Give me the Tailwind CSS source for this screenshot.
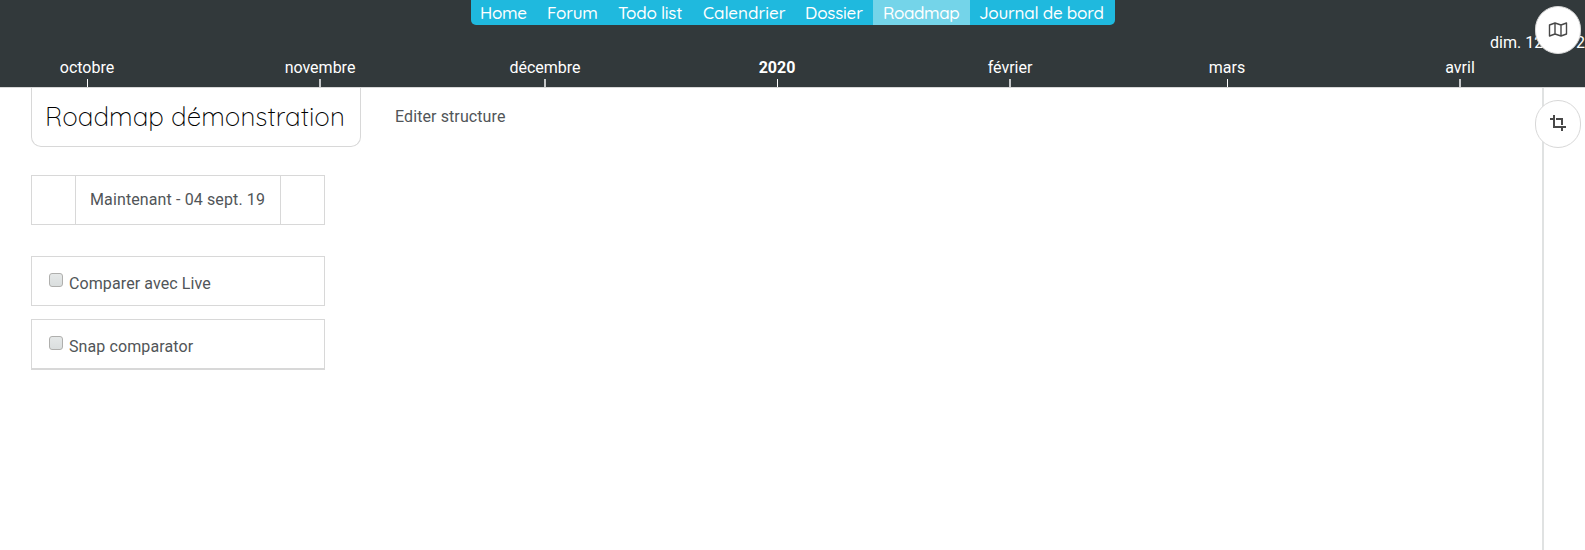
<!DOCTYPE html>
<html lang="fr">
<head>
<meta charset="utf-8">
<title>Roadmap démonstration</title>
<script src="https://cdn.jsdelivr.net/npm/@tailwindcss/browser@4"></script>
</head>
<body class="relative h-[550px] w-[1585px] overflow-hidden bg-white font-['Roboto',sans-serif] text-[16px] text-[#515558]">
<header class="relative flex h-[88px] flex-col border-b border-[#d8d8d8] bg-[#32393b] text-white">
  <nav class="ml-[471px] flex h-[25px] w-[644px] overflow-hidden rounded-b-[5px] bg-[#1fb9de] font-['Quicksand','Lato',sans-serif] text-[17px] leading-[26px] font-medium whitespace-nowrap">
    <a class="w-[66px] pl-[9px] tracking-[-0.3px]">Home</a>
    <a class="w-[71px] pl-[10px] tracking-[-0.3px]">Forum</a>
    <a class="w-[85px] pl-[10px] tracking-[-0.25px]">Todo list</a>
    <a class="w-[103px] pl-[10px]">Calendrier</a>
    <a class="w-[77px] pl-[9px] tracking-[-0.2px]">Dossier</a>
    <a class="w-[97px] bg-[#74d4e9] pl-[10px] tracking-[-0.4px]">Roadmap</a>
    <a class="w-[145px] pl-[9px] tracking-[-0.25px]">Journal de bord</a>
  </nav>
  <div class="mt-[33px] flex h-[29px] leading-5 whitespace-nowrap">
    <div class="ml-[87px] flex w-0 flex-col items-center"><span>octobre</span><i class="mt-px h-2 w-px shrink-0 bg-white"></i></div>
    <div class="ml-[233px] flex w-0 flex-col items-center"><span>novembre</span><i class="mt-px h-2 w-[2px] shrink-0 bg-[#c5c7c8]"></i></div>
    <div class="ml-[225px] flex w-0 flex-col items-center"><span>décembre</span><i class="mt-px h-2 w-[2px] shrink-0 bg-[#c5c7c8]"></i></div>
    <div class="ml-[232px] flex w-0 flex-col items-center font-bold"><span>2020</span><i class="mt-px h-2 w-px shrink-0 bg-white"></i></div>
    <div class="ml-[233px] flex w-0 flex-col items-center"><span>février</span><i class="mt-px h-2 w-[2px] shrink-0 bg-[#c5c7c8]"></i></div>
    <div class="ml-[217px] flex w-0 flex-col items-center"><span>mars</span><i class="mt-px h-2 w-px shrink-0 bg-white"></i></div>
    <div class="ml-[233px] flex w-0 flex-col items-center"><span>avril</span><i class="mt-px h-2 w-[2px] shrink-0 bg-[#c5c7c8]"></i></div>
  </div>
  <span class="absolute top-[33px] left-[1490px] leading-5 whitespace-nowrap">dim. 12 avr. 2020</span>
</header>
<main class="flex h-[462px] items-start">
  <section class="ml-[31px] flex flex-col items-start">
    <div class="flex items-start">
      <h1 class="h-[59px] w-[330px] rounded-b-[10px] border border-t-0 border-[#d8d8d8] pl-[13px] font-['Quicksand','Lato',sans-serif] text-[26px] leading-[58px] font-[350] tracking-[0.05px] whitespace-nowrap text-black">Roadmap démonstration</h1>
      <a class="mt-[19px] ml-[34px] leading-5 tracking-[0.1px]">Editer structure</a>
    </div>
    <div class="mt-[28px] flex h-[50px] w-[294px] border border-[#d8d8d8] leading-[48px]">
      <span class="w-[44px] border-r border-[#d8d8d8]"></span>
      <span class="w-[205px] border-r border-[#d8d8d8] pl-[14px] tracking-[0.12px] whitespace-nowrap">Maintenant - 04 sept. 19</span>
    </div>
    <label class="mt-[31px] flex h-[50px] w-[294px] border border-[#d8d8d8] pl-[17px]">
      <i class="mt-[16px] h-[14px] w-[14px] rounded-[3px] border border-[#afafad] bg-linear-to-b from-[#e5e8e8] to-[#dadede]"></i>
      <span class="mt-[17px] ml-[6px] leading-5 tracking-[0.1px]">Comparer avec Live</span>
    </label>
    <label class="mt-[13px] flex h-[51px] w-[294px] border border-b-2 border-[#d8d8d8] pl-[17px]">
      <i class="mt-[16px] h-[14px] w-[14px] rounded-[3px] border border-[#afafad] bg-linear-to-b from-[#e5e8e8] to-[#dadede]"></i>
      <span class="mt-[17px] ml-[6px] leading-5 tracking-[0.1px]">Snap comparator</span>
    </label>
  </section>
  <div class="mr-[41px] ml-auto h-full w-[2px] bg-[#e0e2e2]"></div>
</main>
<button class="absolute top-[6px] left-[1535px] flex h-[48px] w-[46px] items-center justify-center rounded-full border border-[#d8d8d8] bg-white">
  <svg width="20" height="18" viewBox="0 0 20 18" fill="none" stroke="#484848" stroke-width="1.4" stroke-linejoin="round"><path d="M1.500 4 7 2 13 4 18.500 2V13L13 15 7 13 1.500 15ZM7 2V13M13 4V15"/></svg>
</button>
<button class="absolute top-[100px] left-[1535px] flex h-[48px] w-[46px] items-center justify-center rounded-full border border-[#d8d8d8] bg-white">
  <svg class="-mt-[2px]" width="16" height="16" viewBox="0 0 16 16" fill="none" stroke="#484848" stroke-width="2"><path d="M4 0V12H16M0 4H3M6 4H12V10M12 13V16"/></svg>
</button>
</body>
</html>
